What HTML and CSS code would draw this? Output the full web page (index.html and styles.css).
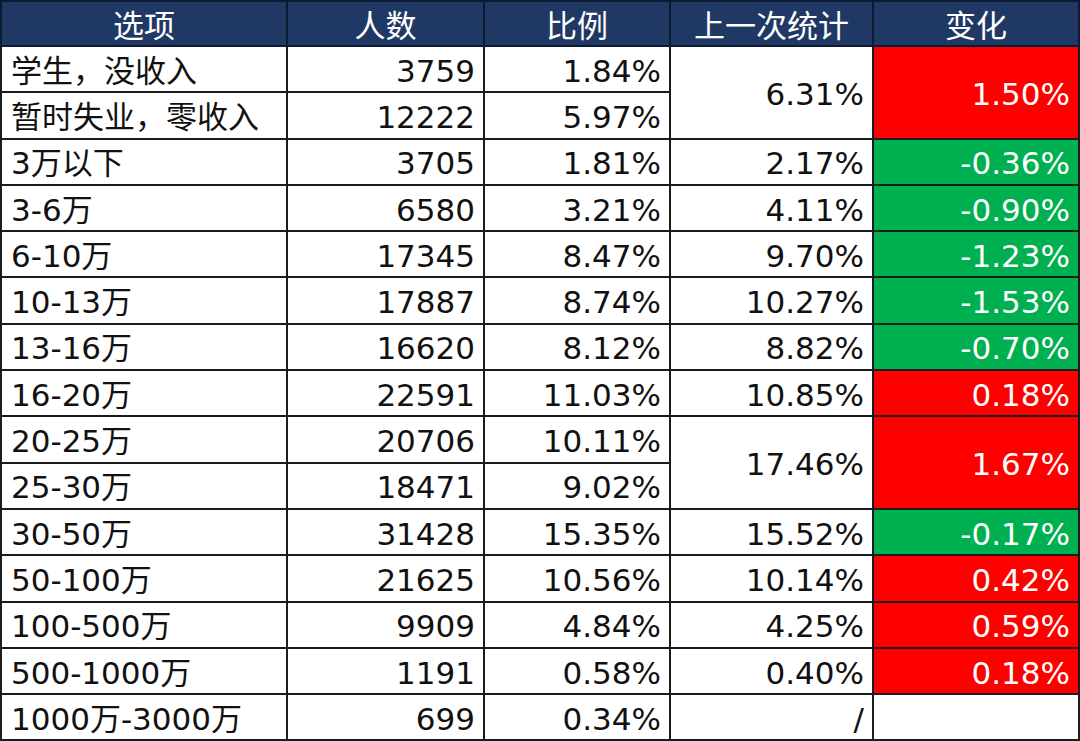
FILE: index.html
```html
<!DOCTYPE html>
<html lang="zh">
<head>
<meta charset="utf-8">
<link rel="stylesheet" href="styles.css">
</head>
<body>
<table class="tbl">
  <colgroup>
    <col class="c1"><col class="c2"><col class="c3"><col class="c4"><col class="c5">
  </colgroup>
  <thead>
    <tr class="hrow"><th>选项</th><th>人数</th><th>比例</th><th>上一次统计</th><th>变化</th></tr>
  </thead>
  <tbody>
    <tr><td class="lbl">学生，没收入</td><td class="num">3759</td><td class="num">1.84%</td><td class="num" rowspan="2">6.31%</td><td class="num up" rowspan="2">1.50%</td></tr>
    <tr><td class="lbl">暂时失业，零收入</td><td class="num">12222</td><td class="num">5.97%</td></tr>
    <tr><td class="lbl">3万以下</td><td class="num">3705</td><td class="num">1.81%</td><td class="num">2.17%</td><td class="num down">-0.36%</td></tr>
    <tr><td class="lbl">3-6万</td><td class="num">6580</td><td class="num">3.21%</td><td class="num">4.11%</td><td class="num down">-0.90%</td></tr>
    <tr><td class="lbl">6-10万</td><td class="num">17345</td><td class="num">8.47%</td><td class="num">9.70%</td><td class="num down">-1.23%</td></tr>
    <tr><td class="lbl">10-13万</td><td class="num">17887</td><td class="num">8.74%</td><td class="num">10.27%</td><td class="num down">-1.53%</td></tr>
    <tr><td class="lbl">13-16万</td><td class="num">16620</td><td class="num">8.12%</td><td class="num">8.82%</td><td class="num down">-0.70%</td></tr>
    <tr><td class="lbl">16-20万</td><td class="num">22591</td><td class="num">11.03%</td><td class="num">10.85%</td><td class="num up">0.18%</td></tr>
    <tr><td class="lbl">20-25万</td><td class="num">20706</td><td class="num">10.11%</td><td class="num" rowspan="2">17.46%</td><td class="num up" rowspan="2">1.67%</td></tr>
    <tr><td class="lbl">25-30万</td><td class="num">18471</td><td class="num">9.02%</td></tr>
    <tr><td class="lbl">30-50万</td><td class="num">31428</td><td class="num">15.35%</td><td class="num">15.52%</td><td class="num down">-0.17%</td></tr>
    <tr><td class="lbl">50-100万</td><td class="num">21625</td><td class="num">10.56%</td><td class="num">10.14%</td><td class="num up">0.42%</td></tr>
    <tr><td class="lbl">100-500万</td><td class="num">9909</td><td class="num">4.84%</td><td class="num">4.25%</td><td class="num up">0.59%</td></tr>
    <tr><td class="lbl">500-1000万</td><td class="num">1191</td><td class="num">0.58%</td><td class="num">0.40%</td><td class="num up">0.18%</td></tr>
    <tr><td class="lbl">1000万-3000万</td><td class="num">699</td><td class="num">0.34%</td><td class="num">/</td><td class="num"></td></tr>
  </tbody>
</table>
</body>
</html>
```

FILE: styles.css
```css
html, body {
  margin: 0;
  padding: 0;
  background: #ffffff;
}
.tbl {
  border-collapse: collapse;
  table-layout: fixed;
  width: 1078px;
  font-family: "DejaVu Sans", "Noto Sans CJK SC", sans-serif;
  font-size: 31px;
  color: #111111;
}
.c1 { width: 286px; }
.c2 { width: 197px; }
.c3 { width: 186px; }
.c4 { width: 203px; }
.c5 { width: 206px; }
.tbl tr {
  height: 46.3px;
}
.tbl .hrow {
  height: 45px;
}
.tbl th,
.tbl td {
  border: 2px solid #1c1c1c;
  padding: 3px 0 0 0;
  line-height: 40px;
  white-space: nowrap;
}
.tbl td {
  font-weight: normal;
}
.tbl th {
  background: #1f3864;
  color: #ffffff;
  font-weight: normal;
  text-align: center;
  border-color: #0d1a33;
  font-family: "Noto Sans CJK SC", sans-serif;
  font-size: 31px;
  padding-top: 0;
}
.lbl {
  text-align: left;
  padding-left: 9px !important;
}
.num {
  text-align: right;
  padding-right: 8px !important;
}
.up {
  background: #ff0000;
  color: #ffffff;
}
.down {
  background: #00b050;
  color: #ffffff;
}
```
